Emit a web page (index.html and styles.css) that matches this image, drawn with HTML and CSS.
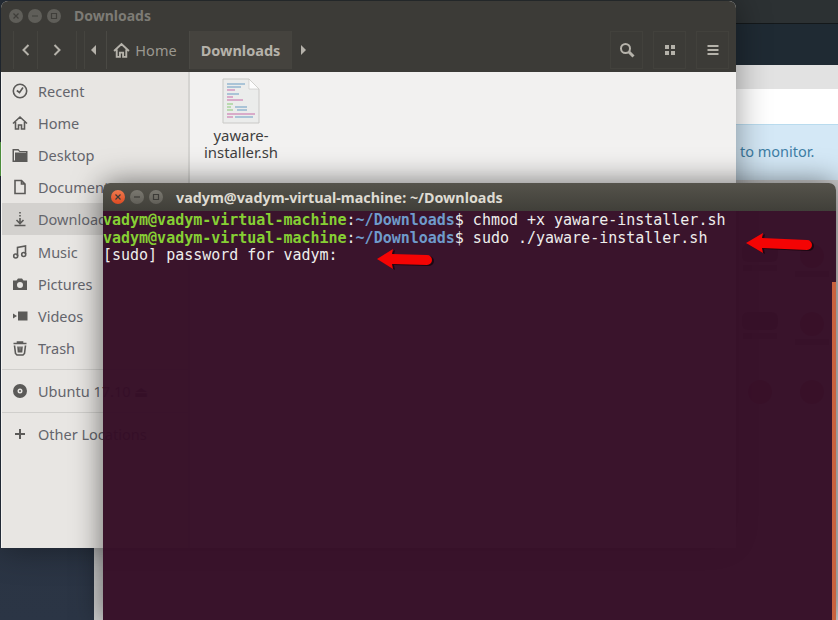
FILE: index.html
```html
<!DOCTYPE html>
<html lang="en">
<head>
<meta charset="utf-8">
<title>Downloads</title>
<link rel="stylesheet" href="styles.css">
</head>
<body>
<div class="desktop">

  <div class="webpage">
    <div class="web-top"></div>
    <div class="web-nav"></div>
    <div class="web-tabs"></div>
    <div class="web-head"></div>
    <div class="web-alert"><span>to monitor.</span></div>
    <div class="web-tiles">
      <div class="tile"><i class="t-icon t-dark"></i><i class="t-label"></i></div>
      <div class="tile"><i class="t-icon t-red"></i><i class="t-label"></i></div>
      <div class="tile"><i class="t-icon t-dark"></i><i class="t-label"></i></div>
      <div class="tile"><i class="t-icon t-red"></i><i class="t-label"></i></div>
      <div class="tile"><i class="t-icon t-red"></i></div>
      <div class="tile"><i class="t-icon t-red"></i></div>
    </div>
  </div>
  <i class="edge-green"></i>

  <section class="files">
    <header class="files-head">
      <div class="files-title">
        <span class="wbtn"><svg viewBox="0 0 8 8"><path d="M1.500 1.500l5 5M6.500 1.500l-5 5"/></svg></span>
        <span class="wbtn"><svg viewBox="0 0 8 8"><path d="M1 4h6"/></svg></span>
        <span class="wbtn"><svg viewBox="0 0 8 8"><path d="M1.500 1.500h5v5h-5z"/></svg></span>
        <span class="files-name">Downloads</span>
      </div>
      <div class="toolbar">
        <div class="tb tb-nav"><svg viewBox="0 0 16 16"><path d="M10.500 3l-5 5 5 5"/></svg></div>
        <div class="tb tb-nav tb-fwd"><svg viewBox="0 0 16 16"><path d="M5.500 3l5 5-5 5"/></svg></div>
        <div class="tb tb-tri tb-tri-left"><svg viewBox="0 0 16 16"><path class="fill" d="M10 3v10l-5-5z"/></svg></div>
        <div class="tb crumb"><svg viewBox="0 0 16 16"><path class="home" d="M1 8.500L8 2l7 6.500M3.500 7v7h3v-4h3v4h3V7"/></svg>Home</div>
        <div class="tb crumb crumb-on">Downloads</div>
        <div class="tb tb-tri"><svg viewBox="0 0 16 16"><path class="fill" d="M6 3v10l5-5z"/></svg></div>
        <div class="tb tb-tool tb-first"><svg viewBox="0 0 16 16"><circle cx="6.500" cy="6.500" r="4.500"/><path class="thick" d="M10 10l4.500 4.500"/></svg></div>
        <div class="tb tb-tool"><svg viewBox="0 0 16 16"><path class="fill" d="M3 3h4v4H3zM9 3h4v4H9zM3 9h4v4H3zM9 9h4v4H9z"/></svg></div>
        <div class="tb tb-tool"><svg viewBox="0 0 16 16"><path class="fill" d="M2.500 3h11v2h-11zM2.500 7h11v2h-11zM2.500 11h11v2h-11z"/></svg></div>
      </div>
    </header>
    <div class="files-main">
      <nav class="side">
        <div class="place"><svg viewBox="0 0 16 16"><circle cx="8" cy="8" r="6.700"/><path d="M4.800 7.500l2.700 2 3.500-5"/></svg><span>Recent</span></div>
        <div class="place"><svg viewBox="0 0 16 16"><path d="M1 8.500L8 2l7 6.500M3.500 7v7h3v-4h3v4h3V7"/></svg><span>Home</span></div>
        <div class="place"><svg viewBox="0 0 16 16"><path class="fill" d="M0.500 2h6l1.500 2h7.500v11H0.500zM2 4v9.500h1V5.500h11V5H7.500L6 3.500H2z"/></svg><span>Desktop</span></div>
        <div class="place"><svg viewBox="0 0 16 16"><path d="M3 1.500h6.500l3.500 3.500v9.500H3zM9.500 1.500V5H13"/></svg><span>Documents</span></div>
        <div class="place place-on"><svg viewBox="0 0 16 16"><path d="M8 1v1.500M8 4v1.500M8 7v5M4.500 9L8 12.500 11.500 9M2.500 14.500h11"/></svg><span>Downloads</span></div>
        <div class="place"><svg viewBox="0 0 16 16"><path d="M5.500 12V3.500l8-1.500v8"/><circle cx="3.700" cy="12" r="2"/><circle cx="11.700" cy="10.500" r="2"/></svg><span>Music</span></div>
        <div class="place"><svg viewBox="0 0 16 16"><path class="fill" fill-rule="evenodd" d="M1 4.500h3.500L6 2.500h4l1.500 2H15v9.500H1zM8 6a3 3 0 1 0 0 6 3 3 0 0 0 0-6z"/></svg><span>Pictures</span></div>
        <div class="place"><svg viewBox="0 0 16 16"><path class="fill" d="M6 3.500h9.500v9H6zM1 5.500l4 2.500-4 2.500z"/></svg><span>Videos</span></div>
        <div class="place"><svg viewBox="0 0 16 16"><path d="M1.500 3.500h13M5.500 3.500V2h5v1.500M2.500 5.500l1 8 1.500 1.500h6l1.500-1.500 1-8M6 6.500l.5 6M10 6.500l-.5 6M8 6.500v6"/></svg><span>Trash</span></div>
        <div class="sep"></div>
        <div class="place"><svg viewBox="0 0 16 16"><path class="fill" fill-rule="evenodd" d="M8 1a7 7 0 1 0 0 14A7 7 0 0 0 8 1zM8 5.500a2.500 2.500 0 1 1 0 5 2.500 2.500 0 0 1 0-5zM8 7a1 1 0 1 0 0 2 1 1 0 0 0 0-2z"/></svg><span>Ubuntu 17.10 &#9167;</span></div>
        <div class="sep"></div>
        <div class="place"><svg viewBox="0 0 16 16"><path class="thick" d="M8 3v10M3 8h10"/></svg><span>Other Locations</span></div>
      </nav>
      <div class="grid">
        <div class="file">
          <svg class="file-icon" viewBox="0 0 38 46">
            <path class="f-page" d="M1 1h26l10 10v34H1z"/>
            <path class="f-ear" d="M27 1v10h10z"/>
            <path class="f-l1" d="M5 6h18M5 9h14M5 16h12"/>
            <path class="f-l2" d="M5 12h8M5 19h6M5 22h16"/>
            <path class="f-l3" d="M5 26h6M5 29h4M5 32h6"/>
            <path class="f-l1" d="M13 29h12M15 32h10"/>
            <path class="f-l2" d="M5 36h28M5 39h6"/>
            <path class="f-l1" d="M13 39h18"/>
          </svg>
          <span class="file-name">yaware-<br>installer.sh</span>
        </div>
      </div>
    </div>
  </section>

  <section class="term">
    <header class="term-head">
      <span class="tbtn tbtn-close"><svg viewBox="0 0 8 8"><path d="M1.500 1.500l5 5M6.500 1.500l-5 5"/></svg></span>
      <span class="tbtn"><svg viewBox="0 0 8 8"><path d="M1 4h6"/></svg></span>
      <span class="tbtn"><svg viewBox="0 0 8 8"><path d="M1.500 1.500h5v5h-5z"/></svg></span>
      <span class="term-title">vadym@vadym-virtual-machine: ~/Downloads</span>
    </header>
    <div class="term-body">
<div class="line"><b class="u">vadym@vadym-virtual-machine</b>:<b class="p">~/Downloads</b>$ chmod +x yaware-installer.sh</div>
<div class="line"><b class="u">vadym@vadym-virtual-machine</b>:<b class="p">~/Downloads</b>$ sudo ./yaware-installer.sh</div>
<div class="line">[sudo] password for vadym:</div>
      <i class="stripe"></i>
      <svg class="arrow arrow-a" viewBox="0 0 60 26"><path class="a-sh" d="M2 12L18 2l-1 5 35 1a5 5 0 0 1 0 10l-35-1 1 5z"/><path class="a-fg" d="M0 11L16 1l-1 5 35 1a5 5 0 0 1 0 10l-35-1 1 5z"/></svg>
      <svg class="arrow arrow-b" viewBox="0 0 72 26"><path class="a-sh" d="M2 12L19 2l-1 5 45 2a5 5 0 0 1 0 10l-45-2 1 5z"/><path class="a-fg" d="M0 11L17 1l-1 5 45 2a5 5 0 0 1 0 10l-45-2 1 5z"/></svg>
    </div>
  </section>

</div>
</body>
</html>
```

FILE: styles.css
```css
* { box-sizing: border-box; }
html, body { margin: 0; padding: 0; }
body { width: 838px; height: 620px; overflow: hidden; background: #2a3340; }

.desktop {
  position: relative;
  width: 838px;
  height: 620px;
  overflow: hidden;
  font-family: "Noto Sans", "Open Sans", sans-serif;
  background: linear-gradient(#262e38, #2b3545);
}
.edge-green {
  position: absolute;
  left: 0;
  top: 142px;
  width: 1px;
  height: 34px;
  background: #5fae4a;
}

/* page behind the windows */
.webpage {
  position: absolute;
  left: 94px;
  top: 0;
  right: 0;
  bottom: 0;
  display: flex;
  flex-direction: column;
  background: #cfcfcf;
}
.web-top { height: 24px; background: #2c3133; border-bottom: 1px solid #14181a; }
.web-nav { height: 41px; background: #1f2a33; }
.web-tabs { height: 24px; background: #e2e2e2; }
.web-head { height: 35px; background: #fff; }
.web-alert {
  height: 56px;
  background: #d4e8f6;
  border-top: 1px solid #b9dbee;
  padding: 16px 0 0 646px;
  font-size: 14.500px;
  line-height: 20px;
  color: #3f7fa6;
  white-space: nowrap;
}
.web-tiles {
  display: grid;
  grid-template-columns: 40px 32px;
  grid-auto-rows: 68px;
  column-gap: 16px;
  padding: 64px 0 0 646px;
}
.tile { display: flex; flex-direction: column; gap: 3px; align-items: center; }
.t-icon { display: block; width: 36px; height: 18px; border-radius: 6px; }
.t-dark { background: #8a8a8a; }
.t-red { background: #b87a84; width: 24px; height: 24px; border-radius: 12px; }
.t-label { display: block; width: 34px; height: 6px; background: #999; }

/* file manager */
.files {
  position: absolute;
  left: 1px;
  top: 1px;
  width: 735px;
  height: 547px;
  display: flex;
  flex-direction: column;
  border-radius: 7px 7px 0 0;
  overflow: hidden;
  background: #f2f1f0;
  box-shadow: 0 0 34px rgba(0, 0, 0, 0.4);
}
.files-head { background: #3c3b37; height: 71px; flex: none; }
.files-title { display: flex; align-items: center; height: 29px; padding: 0 0 0 8px; gap: 5px; }
.wbtn {
  display: flex;
  align-items: center;
  justify-content: center;
  width: 14px;
  height: 14px;
  border-radius: 50%;
  background: #5f5e59;
}
.wbtn svg { width: 8px; height: 8px; fill: none; stroke: #3f3e3a; stroke-width: 1.200; }
.files-name { margin-left: 8px; font-size: 14px; font-weight: 700; color: #7d7b75; }

.toolbar { display: flex; height: 42px; padding: 0 0 0 12px; }
.tb {
  display: flex;
  align-items: center;
  justify-content: center;
  color: #9b9890;
  font-size: 14.500px;
  margin: 1px 0 3px;
  border-left: 1px solid #45443f;
}
.tb svg { width: 16px; height: 16px; fill: none; stroke: #b5b2aa; stroke-width: 2; }
.tb svg .fill { fill: #b5b2aa; stroke: none; }
.tb svg .thick { stroke-width: 3; }
.tb svg .home { stroke-width: 1.800; }
.tb-nav { width: 24px; }
.tb-fwd { width: 40px; border-right: 1px solid #45443f; }
.tb-tri { width: 22px; }
.tb-tri-left { margin-left: 7px; padding-right: 4px; }
.crumb { gap: 5px; width: 83px; padding-right: 6px; border-left: 1px solid #4a4944; }
.crumb svg { width: 17px; height: 17px; }
.crumb-on { width: 102px; padding-right: 0; background: #45433e; font-weight: 700; color: #b5b2aa; }
.tb-tool { width: 33px; margin-left: 10px; border: 1px solid #42413c; }
.tb-first { margin-left: 297px; }

.files-main { flex: 1; display: flex; min-height: 0; }
.side {
  width: 189px;
  flex: none;
  padding-top: 3px;
  background: #e8e6e3;
  border-right: 2px solid #d5d4d1;
  border-left: 1px solid #f4f3f1;
}
.place {
  display: flex;
  align-items: center;
  height: 32.100px;
  padding-left: 10px;
  font-size: 14.500px;
  color: #64656c;
  white-space: nowrap;
}
.place svg {
  width: 16px;
  height: 16px;
  flex: none;
  margin-right: 10px;
  fill: none;
  stroke: #5b5a58;
  stroke-width: 1.600;
}
.place svg .fill { fill: #5b5a58; stroke: none; }
.place svg .thick { stroke-width: 2; }
.place-on { background: #d3d1ce; }
.sep { height: 11px; border-bottom: 1px solid #d0cfcc; transform: translateY(-5px); }

.grid { flex: 1; padding: 6px 0 0 7px; background: #f2f1f0; }
.file { width: 88px; display: flex; flex-direction: column; align-items: center; }
.file-icon { width: 38px; height: 46px; display: block; }
.file-name {
  margin-top: 3px;
  font-size: 14.900px;
  line-height: 17px;
  text-align: center;
  color: #3f3f3f;
}
.f-page { fill: #ebeceb; stroke: #c9c9c6; stroke-width: 1; }
.f-ear { fill: #fdfdfd; stroke: #c9c9c6; stroke-width: .7; }
.f-l1 { stroke: #6a9cc4; stroke-width: 1.200; fill: none; }
.f-l2 { stroke: #c86aa8; stroke-width: 1.200; fill: none; }
.f-l3 { stroke: #8cc878; stroke-width: 1.200; fill: none; }

/* terminal */
.term {
  position: absolute;
  left: 103px;
  top: 183px;
  width: 733px;
  height: 437px;
  display: flex;
  flex-direction: column;
  border-radius: 7px 7px 0 0;
  box-shadow: 0 0 30px rgba(0, 0, 0, 0.55);
}
.term-head {
  flex: none;
  height: 28px;
  display: flex;
  align-items: center;
  gap: 5px;
  padding-left: 8px;
  border-radius: 7px 7px 0 0;
  background: linear-gradient(#55534b, #403f39);
}
.tbtn {
  display: flex;
  align-items: center;
  justify-content: center;
  width: 14px;
  height: 14px;
  border-radius: 50%;
  background: linear-gradient(#7a7870, #615f58);
}
.tbtn svg { width: 8px; height: 8px; fill: none; stroke: #3c3b37; stroke-width: 1.200; }
.tbtn-close { background: linear-gradient(#f07a4e, #dd4a22); }
.term-title { margin-left: 8px; font-size: 14.300px; font-weight: 700; color: #dedbd2; white-space: nowrap; }

.term-body {
  position: relative;
  flex: 1;
  padding-top: 1px;
  background: rgba(52, 12, 37, 0.97);
  font-family: "DejaVu Sans Mono", "Liberation Mono", monospace;
  font-size: 15px;
  letter-spacing: -0.010px;
  line-height: 17.500px;
  color: #eeeeec;
}
.line { white-space: pre; height: 17.500px; }
.u { color: #86cf34; font-weight: 700; }
.p { color: #6f9bcb; font-weight: 700; }
.stripe {
  position: absolute;
  right: 0;
  top: 71px;
  bottom: 0;
  width: 4px;
  background: #c9623f;
}
.arrow { position: absolute; display: block; }
.arrow-a { left: 274px; top: 37px; width: 60px; height: 26px; }
.arrow-b { left: 643px; top: 21px; width: 72px; height: 26px; }
.a-fg { fill: #f40404; }
.a-sh { fill: #1c0712; }
```
